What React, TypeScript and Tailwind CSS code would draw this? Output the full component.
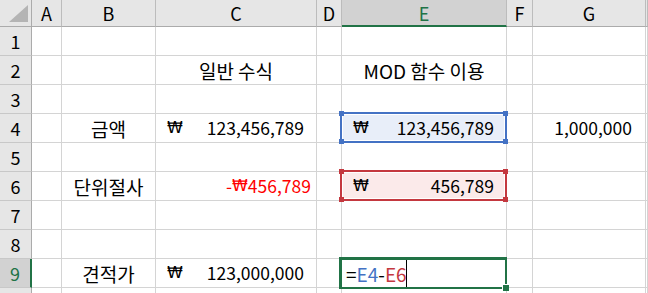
import React from "react";

type CellDef = {
  content?: React.ReactNode;
  className?: string;
  overlay?: React.ReactNode;
};

const colLetters = ["A", "B", "C", "D", "E", "F", "G", ""];
const colKeys = ["A", "B", "C", "D", "E", "F", "G", "H"];

const Won = () => <span className="font-['DejaVu_Sans',sans-serif] text-[16px]">₩</span>;

const Accounting = ({ value }: { value: string }) => (
  <div className="flex w-full items-center justify-between pl-[11px] pr-[12px]">
    <Won />
    <span className="text-[17.5px]">{value}</span>
  </div>
);

const BlueBox = () => (
  <div className="absolute -top-[2px] -left-[2px] -right-[1px] -bottom-[1px] z-10 border-2 border-[#4472c4] shadow-[inset_0_0_0_1px_#ffffff] pointer-events-none">
    <span className="absolute -top-[3px] -left-[3px] w-[5px] h-[5px] bg-[#4472c4]" />
    <span className="absolute -top-[3px] -right-[3px] w-[5px] h-[5px] bg-[#4472c4]" />
    <span className="absolute -bottom-[3px] -left-[3px] w-[5px] h-[5px] bg-[#4472c4]" />
    <span className="absolute -bottom-[3px] -right-[3px] w-[5px] h-[5px] bg-[#4472c4]" />
  </div>
);

const RedBox = () => (
  <div className="absolute -top-[2px] -left-[2px] -right-[1px] -bottom-[1px] z-10 border-2 border-[#c4383f] shadow-[inset_0_0_0_1px_#ffffff] pointer-events-none">
    <span className="absolute -top-[3px] -left-[3px] w-[5px] h-[5px] bg-[#c4383f]" />
    <span className="absolute -top-[3px] -right-[3px] w-[5px] h-[5px] bg-[#c4383f]" />
    <span className="absolute -bottom-[3px] -left-[3px] w-[5px] h-[5px] bg-[#c4383f]" />
    <span className="absolute -bottom-[3px] -right-[3px] w-[5px] h-[5px] bg-[#c4383f]" />
  </div>
);

const ActiveBox = () => (
  <div className="absolute -top-[2px] -left-[3px] -right-[1px] -bottom-[2px] z-10 border-t-[3px] border-l-[3px] border-r-2 border-b-2 border-[#217346] pointer-events-none">
    <span className="absolute -bottom-[4px] -right-[4px] w-[7px] h-[7px] bg-[#217346] border-l border-t border-white" />
  </div>
);

const cells: Record<string, CellDef> = {
  C2: { content: "일반 수식", className: "justify-center" },
  E2: { content: "MOD 함수 이용", className: "justify-center" },
  B4: { content: "금액", className: "justify-center" },
  C4: { content: <Accounting value="123,456,789" /> },
  E4: { content: <Accounting value="123,456,789" />, className: "bg-[#e8eef9]", overlay: <BlueBox /> },
  G4: { content: <span className="text-[17.5px]">1,000,000</span>, className: "justify-end pr-[13px]" },
  B6: { content: "단위절사", className: "justify-center" },
  C6: {
    content: (
      <span className="flex items-center text-[17.5px]">
        -<Won />456,789
      </span>
    ),
    className: "justify-end pr-[5px] text-[#ff0000]",
  },
  E6: { content: <Accounting value="456,789" />, className: "bg-[#fbeaea]", overlay: <RedBox /> },
  B9: { content: "견적가", className: "justify-center" },
  C9: { content: <Accounting value="123,000,000" /> },
  E9: {
    content: (
      <div className="flex pl-[4px]">
        <span>=</span>
        <span className="text-[#4472c4]">E4</span>
        <span>-</span>
        <span className="text-[#c4383f]">E6</span>
        {/* text caret */}
        <span className="absolute left-[64px] top-0 bottom-0 w-px bg-black" />
      </div>
    ),
    overlay: <ActiveBox />,
  },
};

const App = () => {
  const rows = [1, 2, 3, 4, 5, 6, 7, 8, 9, 10];

  return (
    <div className="w-[648px] h-[293px] overflow-hidden bg-white text-black font-['Noto_Sans_CJK_KR',sans-serif]">
      <div className="grid grid-cols-[32px_30px_94px_161px_25px_165px_26px_113px_1fr] grid-rows-[27px_repeat(10,29px)]">
        {/* Corner */}
        <div className="bg-[#e6e6e6] border-r border-b border-[#ababab] flex items-end justify-end pr-[3px] pb-[4px]">
          <svg width="19" height="17" viewBox="0 0 19 17">
            <polygon points="19,0 19,17 0,17" fill="#b4b4b4" />
          </svg>
        </div>

        {/* Column headers */}
        {colLetters.map((c, i) =>
          c === "E" ? (
            <div
              key={i}
              className="bg-[#d2d2d2] border-r border-r-[#bcbcbc] border-b-2 border-b-[#217346] flex items-center justify-center text-[18px] leading-none text-[#217346]"
            >
              {c}
            </div>
          ) : (
            <div
              key={i}
              className="bg-[#e6e6e6] border-r border-r-[#bcbcbc] border-b border-b-[#ababab] flex items-center justify-center text-[18px] leading-none"
            >
              {c}
            </div>
          )
        )}

        {rows.map((r) => (
          <React.Fragment key={r}>
            {r === 9 ? (
              <div className="bg-[#d2d2d2] border-r-2 border-r-[#217346] border-b border-b-[#c8c8c8] flex items-center justify-center text-[18px] leading-none text-[#217346]">
                {r}
              </div>
            ) : (
              <div className="bg-[#e6e6e6] border-r border-r-[#ababab] border-b border-b-[#c8c8c8] flex items-center justify-center text-[18px] leading-none">
                {r < 10 ? r : null}
              </div>
            )}
            {colKeys.map((c) => {
              const def = cells[`${c}${r}`];
              return (
                <div
                  key={c}
                  className={`relative border-r border-b border-[#d4d4d4] flex items-center whitespace-nowrap text-[19px] leading-none ${def?.className ?? ""}`}
                >
                  {def?.content}
                  {def?.overlay}
                </div>
              );
            })}
          </React.Fragment>
        ))}
      </div>
    </div>
  );
};

export default App;
